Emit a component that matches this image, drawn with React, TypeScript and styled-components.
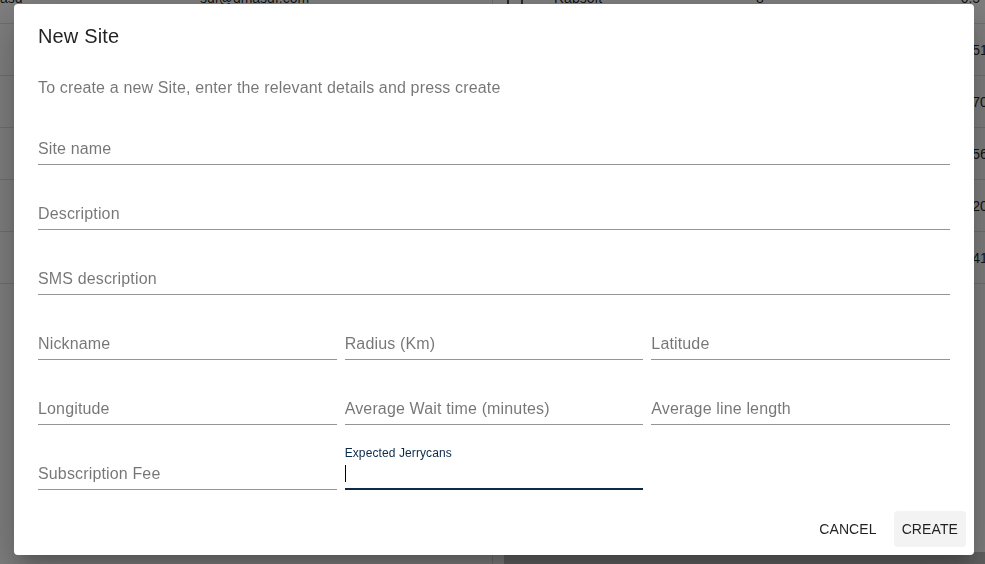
import React from "react";
import styled, { createGlobalStyle } from "styled-components";

const GlobalStyle = createGlobalStyle`
  html, body {
    margin: 0;
    padding: 0;
    height: 100%;
    overflow: hidden;
  }
  body {
    font-family: "Liberation Sans", Arial, Helvetica, sans-serif;
    background: #ffffff;
    color: rgba(0, 0, 0, 0.87);
  }
  * { box-sizing: border-box; }
`;

/* ---------- background page ---------- */

const Page = styled.div`
  display: grid;
  grid-template-columns: 493px 1fr;
  height: 100vh;
  background: #ffffff;
`;

const Panel = styled.section<{ $divider?: boolean }>`
  display: flex;
  flex-direction: column;
  overflow: hidden;
  border-right: ${(p) => (p.$divider ? "1px solid #e0e0e0" : "none")};
`;

const TableBody = styled.div`
  display: flex;
  flex-direction: column;
  margin-top: -28px;
`;

const LeftRow = styled.div`
  display: grid;
  grid-template-columns: 200px 1fr;
  align-items: center;
  height: 52px;
  border-bottom: 1px solid #e0e0e0;
  font-size: 14px;
  color: rgba(0, 0, 0, 0.87);
`;

const RightRow = styled.div`
  display: grid;
  grid-template-columns: 61px 202px 200px 1fr;
  align-items: center;
  height: 52px;
  border-bottom: 1px solid #e0e0e0;
  font-size: 14px;
  color: rgba(0, 0, 0, 0.87);
  white-space: nowrap;
`;

const Check = styled.span`
  display: block;
  width: 16px;
  height: 16px;
  margin-left: 14px;
  border: 2px solid #555;
  border-radius: 2px;
`;

const Spacer = styled.div`
  flex: 1;
`;

const Footer = styled.div`
  height: 12px;
  margin-left: 11px;
  background: #c4c4c4;
`;

/* ---------- dialog ---------- */

const Backdrop = styled.div`
  position: fixed;
  inset: 0;
  background: rgba(0, 0, 0, 0.5);
  display: flex;
  align-items: flex-start;
  padding: 4px 11px 0 14px;
`;

const Dialog = styled.div`
  width: 960px;
  background: #ffffff;
  border-radius: 4px;
  display: flex;
  flex-direction: column;
  box-shadow: 0 11px 15px -7px rgba(0, 0, 0, 0.2),
    0 24px 38px 3px rgba(0, 0, 0, 0.14), 0 9px 46px 8px rgba(0, 0, 0, 0.12);
`;

const Title = styled.h2`
  margin: 0;
  padding: 16px 24px;
  font-size: 20px;
  font-weight: 500;
  line-height: 1.6;
  letter-spacing: 0.0075em;
  color: rgba(0, 0, 0, 0.87);
`;

const Content = styled.div`
  padding: 8px 24px 13px;
  display: flex;
  flex-direction: column;
  gap: 17px;
`;

const Description = styled.p`
  margin: 0;
  font-size: 16px;
  line-height: 24px;
  letter-spacing: 0.15px;
  color: rgba(0, 0, 0, 0.54);
`;

const FieldGrid = styled.div`
  display: grid;
  grid-template-columns: repeat(3, 1fr);
  column-gap: 8px;
  row-gap: 17px;
`;

const FormControl = styled.div<{ $full?: boolean }>`
  position: relative;
  display: flex;
  flex-direction: column;
  padding-top: 16px;
  grid-column: ${(p) => (p.$full ? "1 / -1" : "auto")};
`;

const FieldLabel = styled.label<{ $shrink?: boolean }>`
  position: absolute;
  left: 0;
  top: ${(p) => (p.$shrink ? "5px" : "24px")};
  font-size: ${(p) => (p.$shrink ? "12px" : "16px")};
  line-height: 1;
  letter-spacing: ${(p) => (p.$shrink ? "0.1px" : "0.15px")};
  color: ${(p) => (p.$shrink ? "#0b2a4b" : "rgba(0, 0, 0, 0.54)")};
  pointer-events: none;
  white-space: nowrap;
`;

const InputRoot = styled.div<{ $focused?: boolean }>`
  height: 32px;
  display: flex;
  align-items: center;
  border-bottom: ${(p) =>
    p.$focused ? "2px solid #0b2a4b" : "1px solid rgba(0, 0, 0, 0.42)"};
`;

const Caret = styled.span`
  width: 1px;
  height: 17px;
  background: #000000;
  flex-shrink: 0;
`;

const Input = styled.input`
  flex: 1;
  min-width: 0;
  height: 19px;
  padding: 0;
  border: 0;
  outline: none;
  background: transparent;
  font: inherit;
  font-size: 16px;
  letter-spacing: 0.15px;
  color: rgba(0, 0, 0, 0.87);
`;

const Actions = styled.div`
  display: flex;
  justify-content: flex-end;
  align-items: center;
  gap: 9px;
  padding: 8px;
`;

const ActionButton = styled.button<{ $active?: boolean }>`
  height: 36px;
  min-width: 64px;
  padding: 6px 8px;
  border: 0;
  border-radius: 4px;
  background: ${(p) => (p.$active ? "#f3f3f3" : "transparent")};
  font-family: inherit;
  font-size: 14px;
  font-weight: 500;
  letter-spacing: 0.1px;
  text-transform: uppercase;
  color: rgba(0, 0, 0, 0.87);
  cursor: pointer;
`;

type FieldProps = {
  label: string;
  full?: boolean;
  focused?: boolean;
};

function Field({ label, full, focused }: FieldProps) {
  return (
    <FormControl $full={full}>
      <FieldLabel $shrink={focused}>{label}</FieldLabel>
      <InputRoot $focused={focused}>
        {focused && <Caret />}
        <Input aria-label={label} />
      </InputRoot>
    </FormControl>
  );
}

const rightRows = [
  { name: "Rabsoft", count: "8", value: "-0.5" },
  { name: "Lakeside", count: "3", value: "-0.51" },
  { name: "Kibera", count: "5", value: "-0.70" },
  { name: "Mathare", count: "2", value: "-0.56" },
  { name: "Kawangware", count: "6", value: "-0.20" },
  { name: "Embakasi", count: "4", value: "-0.41" },
];

export default function App() {
  return (
    <>
      <GlobalStyle />
      <Page>
        <Panel $divider>
          <TableBody>
            <LeftRow>
              <span>asd</span>
              <span>sdf@dmasdf.com</span>
            </LeftRow>
            <LeftRow />
            <LeftRow />
            <LeftRow />
            <LeftRow />
            <LeftRow />
          </TableBody>
        </Panel>
        <Panel>
          <TableBody>
            {rightRows.map((r) => (
              <RightRow key={r.name}>
                <Check />
                <span>{r.name}</span>
                <span>{r.count}</span>
                <span>{r.value}</span>
              </RightRow>
            ))}
          </TableBody>
          <Spacer />
          <Footer />
        </Panel>
      </Page>

      <Backdrop>
        <Dialog role="dialog" aria-labelledby="new-site-title">
          <Title id="new-site-title">New Site</Title>
          <Content>
            <Description>
              To create a new Site, enter the relevant details and press create
            </Description>
            <FieldGrid>
              <Field label="Site name" full />
              <Field label="Description" full />
              <Field label="SMS description" full />
              <Field label="Nickname" />
              <Field label="Radius (Km)" />
              <Field label="Latitude" />
              <Field label="Longitude" />
              <Field label="Average Wait time (minutes)" />
              <Field label="Average line length" />
              <Field label="Subscription Fee" />
              <Field label="Expected Jerrycans" focused />
            </FieldGrid>
          </Content>
          <Actions>
            <ActionButton>Cancel</ActionButton>
            <ActionButton $active>Create</ActionButton>
          </Actions>
        </Dialog>
      </Backdrop>
    </>
  );
}
